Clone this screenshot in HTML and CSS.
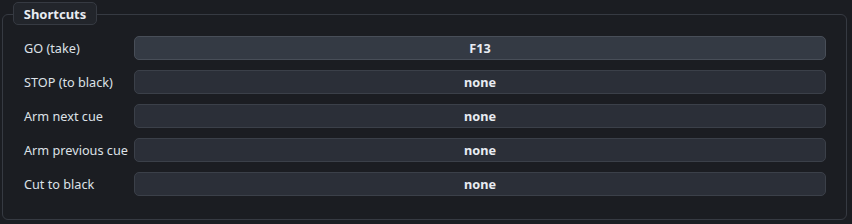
FILE: index.html
```html
<!DOCTYPE html>
<html>
<head>
<meta charset="utf-8">
<link rel="stylesheet" href="styles.css">
</head>
<body>
<div class="group">
  <div class="title">Shortcuts</div>
  <div class="rows">
    <div class="row"><span class="label">GO (take)</span><div class="btn active">F13</div></div>
    <div class="row"><span class="label">STOP (to black)</span><div class="btn">none</div></div>
    <div class="row"><span class="label">Arm next cue</span><div class="btn">none</div></div>
    <div class="row"><span class="label">Arm previous cue</span><div class="btn">none</div></div>
    <div class="row"><span class="label">Cut to black</span><div class="btn">none</div></div>
  </div>
</div>
</body>
</html>
```
FILE: styles.css
```css
html, body {
  margin: 0;
  padding: 0;
  background: #1b1d22;
  font-family: "Noto Sans", "Open Sans", sans-serif;
  font-size: 12.7px;
  color: #dde1e7;
}
body {
  width: 852px;
  height: 224px;
  overflow: hidden;
}
.group {
  position: relative;
  margin: 14px 5px 0 2px;
  height: 206px;
  box-sizing: border-box;
  border: 1px solid #363a42;
  border-radius: 6px;
  padding: 21px 20px 0 21px;
}
.title {
  position: absolute;
  left: 10px;
  top: -13px;
  width: 84px;
  height: 23px;
  box-sizing: border-box;
  background: #22252b;
  border: 1px solid #363a42;
  border-radius: 5px;
  font-weight: 700;
  font-size: 13px;
  color: #e8ecf2;
  display: flex;
  align-items: center;
  justify-content: center;
}
.rows {
  display: flex;
  flex-direction: column;
  gap: 10px;
}
.row {
  display: flex;
  align-items: center;
  height: 24px;
}
.label {
  width: 110px;
  flex: none;
  white-space: nowrap;
}
.btn {
  flex: 1;
  height: 24px;
  box-sizing: border-box;
  border: 1px solid #3b4049;
  border-radius: 5px;
  background: #2b2f38;
  display: flex;
  align-items: center;
  justify-content: center;
  font-weight: 700;
  color: #e8ecf2;
}
.btn.active {
  background: #343a44;
  border-color: #484e58;
}
```
